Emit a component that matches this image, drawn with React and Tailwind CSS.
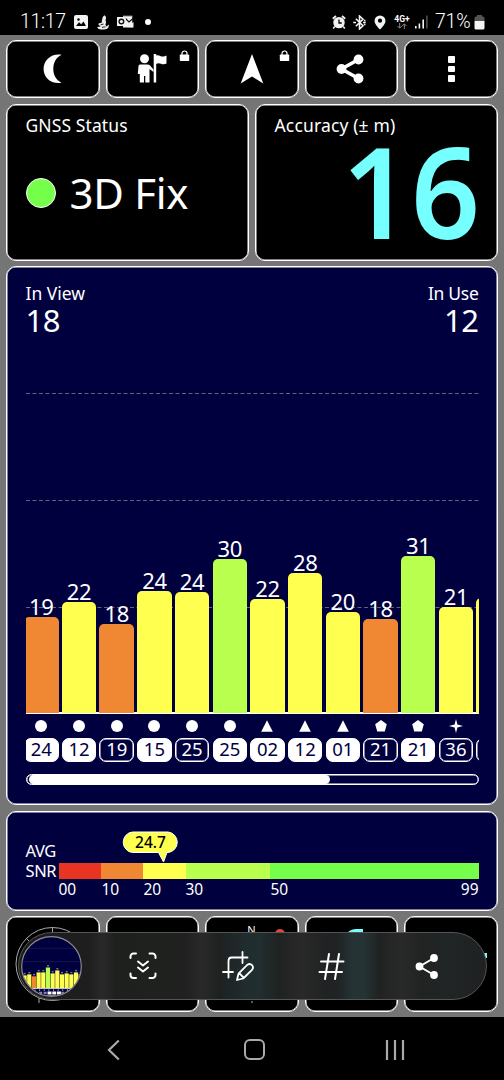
import React from "react";

const ORANGE = "bg-[#f08833]";
const YELLOW = "bg-[#ffff50]";
const LIME = "bg-[#b9ff4d]";

const satellites = [
  { id: "24", snr: 19, height: 96.5, color: ORANGE, shape: "circle", used: true },
  { id: "12", snr: 22, height: 111.5, color: YELLOW, shape: "circle", used: true },
  { id: "19", snr: 18, height: 89.5, color: ORANGE, shape: "circle", used: false },
  { id: "15", snr: 24, height: 122.5, color: YELLOW, shape: "circle", used: true },
  { id: "25", snr: 24, height: 121, color: YELLOW, shape: "circle", used: false },
  { id: "25", snr: 30, height: 154, color: LIME, shape: "circle", used: true },
  { id: "02", snr: 22, height: 114, color: YELLOW, shape: "triangle", used: true },
  { id: "12", snr: 28, height: 140.5, color: YELLOW, shape: "triangle", used: true },
  { id: "01", snr: 20, height: 101.5, color: YELLOW, shape: "triangle", used: true },
  { id: "21", snr: 18, height: 94, color: ORANGE, shape: "pentagon", used: false },
  { id: "21", snr: 31, height: 157, color: LIME, shape: "pentagon", used: true },
  { id: "36", snr: 21, height: 106, color: YELLOW, shape: "star", used: false },
  { id: "", snr: "", height: 115, color: YELLOW, shape: "", used: false },
];

const miniBars = [
  ["#ffff50", 13], ["#ffff50", 14], ["#f08833", 12], ["#ffff50", 16], ["#ffff50", 16],
  ["#b9ff4d", 21], ["#ffff50", 15], ["#ffff50", 18], ["#ffff50", 14], ["#ffff50", 15],
  ["#ffff50", 14], ["#ffff50", 16], ["#ffff50", 14],
];

function Shape({ type }) {
  return (
    <svg width="14" height="14" viewBox="0 0 14 14" fill="white">
      {type === "circle" && <circle cx="7" cy="7" r="6" />}
      {type === "triangle" && <path d="M7 1.2L12.8 12.8H1.2Z" />}
      {type === "pentagon" && <path d="M7 1L12.8 5.2L10.8 12.5H3.2L1.2 5.2Z" />}
      {type === "star" && <path d="M7 0L8.4 5.6L14 7L8.4 8.4L7 14L5.6 8.4L0 7L5.6 5.6Z" />}
    </svg>
  );
}

function StatusBar() {
  return (
    <div className="flex h-[35px] items-center bg-black pt-[9px] pr-[19px] pl-[20px] font-[Roboto,sans-serif] text-white">
      <span className="w-[54px] text-[19.5px] leading-none tracking-[-0.3px] font-light">11:17</span>
      <svg width="14" height="14" viewBox="0 0 14 14">
        <rect width="14" height="14" rx="2" fill="#f3f3f3" />
        <path d="M2 11L5 7.2L7.2 9.2L9.5 6.5L12 11Z" fill="#000" />
        <circle cx="4.5" cy="4.5" r="1.2" fill="#000" />
      </svg>
      <svg className="ml-[9px]" width="12" height="15" viewBox="0 0 12 15">
        <path d="M7.3 .3Q9.3 1 9 3.2L8.5 5.5Q9.6 7 8.4 9.6L9.5 11.5L11.8 9.6Q12.3 12.6 9.5 14L7 14.6H3.5Q.6 14 .2 12L3.6 11.6L1.2 9.3Q2 7.6 4 8L5.2 7Q4.2 6 5.3 4.6Q5 2 7.3 .3Z" fill="#eee" />
        <path d="M3.5 9.8L6.5 9M5 12.3L8.5 11.8" stroke="#111" strokeWidth=".9" fill="none" />
      </svg>
      <svg className="ml-[8px]" width="17" height="14" viewBox="0 0 17 14">
        <path d="M6 .5H15.5V13H6Z" fill="#777" />
        <path d="M6 1.4H15V12H6Z" fill="#f2f2f2" />
        <path d="M8 3L12 7L16 3.5" stroke="#111" strokeWidth="1.2" fill="none" />
        <path d="M10 12L16.5 7V12.5Z" fill="#f2f2f2" />
        <rect x="0" y="2" width="8.8" height="9" fill="#f2f2f2" />
        <circle cx="4.4" cy="6.5" r="2.3" stroke="#111" strokeWidth="1.4" fill="none" />
      </svg>
      <span className="ml-[11px] size-[6px] rounded-full bg-white" />
      <div className="flex-1" />
      <svg width="14" height="14" viewBox="0 0 14 14">
        <path d="M.8 3.8L4 1M13.2 3.8L10 1" stroke="#f3f3f3" strokeWidth="1.8" />
        <circle cx="7" cy="7.6" r="5.7" fill="#f3f3f3" />
        <path d="M7 4.5V8H9.8" stroke="#000" strokeWidth="1.3" fill="none" />
        <path d="M2.8 11.5L1.2 13.5M11.2 11.5L12.8 13.5" stroke="#f3f3f3" strokeWidth="1.5" />
      </svg>
      <svg className="ml-[7px]" width="13" height="15" viewBox="0 0 13 15" fill="none" stroke="#f3f3f3" strokeWidth="1.6">
        <path d="M2.8 3.8L10 10.8L6.5 14V1L10 4.2L2.8 11.2" />
        <path d="M.2 7.5H3M10 7.5H12.8M11 5.8L12.4 5.3M11 9.2L12.4 9.7" />
      </svg>
      <svg className="ml-[8px]" width="12" height="15" viewBox="0 0 12 15">
        <path d="M6 .5A5.5 5.5 0 0 0 .5 6C.5 9.5 6 14.5 6 14.5S11.5 9.5 11.5 6A5.5 5.5 0 0 0 6 .5Z" fill="#f3f3f3" />
        <circle cx="6" cy="5.7" r="2.1" fill="#000" />
      </svg>
      <div className="ml-[8px] flex w-[16px] flex-col items-center">
        <span className="text-[8.5px] leading-[8px] font-bold">4G+</span>
        <svg className="shrink-0" width="10" height="6" viewBox="0 0 10 6" fill="none" stroke="#888" strokeWidth="1">
          <path d="M2.7 0V5M.5 3L2.7 5.2L4.9 3M7.3 6V1M5.2 3L7.3 .8L9.4 3" />
        </svg>
      </div>
      <svg className="ml-[5px]" width="13" height="14" viewBox="0 0 13 14">
        <path d="M.8 11V13.5M4.4 8.5V13.5M8.2 4.5V13.5" stroke="#f3f3f3" strokeWidth="1.6" />
        <path d="M11.9 .5V13.5" stroke="#555" strokeWidth="1.5" />
      </svg>
      <span className="ml-[7px] w-[38px] text-[19.5px] leading-none tracking-[-0.2px] font-light">71%</span>
      <svg className="ml-[1px]" width="11" height="15" viewBox="0 0 11 15">
        <path d="M3 0H8V1.5H9Q10.5 1.5 10.5 3V6H.5V3Q.5 1.5 2 1.5H3Z" fill="#555" />
        <path d="M.5 6H10.5V13Q10.5 14.5 9 14.5H2Q.5 14.5 .5 13Z" fill="#f5f5f5" />
      </svg>
    </div>
  );
}

function ToolButton({ children, locked }) {
  return (
    <button className="relative flex h-[58px] flex-1 items-center justify-center rounded-[10px] border border-white bg-black shadow-[inset_0_0_0_0.5px_white]">
      {children}
      {locked && (
        <svg className="absolute top-[9px] right-[8px]" width="11" height="12" viewBox="0 0 11 12">
          <rect x=".8" y="4.5" width="9.4" height="6.5" rx=".8" fill="white" />
          <path d="M3 5V3.5A2.5 2.5 0 0 1 8 3.5V5" stroke="white" strokeWidth="1.2" fill="none" />
        </svg>
      )}
    </button>
  );
}

function Toolbar() {
  return (
    <div className="flex gap-1.5">
      <ToolButton>
        <svg width="20" height="30" viewBox="0 0 20 30" fill="white">
          <path d="M18.5 .8C8.5 -.8 .6 6 .6 15S8.5 30.5 18.5 28.7C13 26 10.3 21 10.3 15S13 3.5 18.5 .8Z" />
        </svg>
      </ToolButton>
      <ToolButton locked>
        <svg width="30" height="30" viewBox="0 0 30 30" fill="white">
          <circle cx="7.5" cy="4.8" r="4.5" />
          <path d="M3 10.5H10.5Q12 10.5 13 11.5L16.5 15.5V18L12.5 15V28.5H8.3V22H7V28.5H2.8V20H.8L1.5 12Q1.6 10.5 3 10.5Z" />
          <path d="M16.7 0H19.2V28.5H16.7Z" />
          <path d="M19 1.5C23 0 24 4.5 29.5 1.5V9.5C25 12 23 7.5 19 10Z" />
        </svg>
      </ToolButton>
      <ToolButton locked>
        <svg width="24" height="30" viewBox="0 0 24 30" fill="white">
          <path d="M12 0L23.3 29.5L12 22.5L.7 29.5Z" />
        </svg>
      </ToolButton>
      <ToolButton>
        <svg className="-ml-[4px]" width="28" height="30" viewBox="0 0 28 30" fill="white">
          <path d="M22.5 5.5L5.5 15L22.5 24.5" fill="none" stroke="white" strokeWidth="3.6" />
          <circle cx="5.5" cy="15" r="4.9" />
          <circle cx="22.5" cy="5.5" r="4.9" />
          <circle cx="22.5" cy="24.5" r="4.9" />
        </svg>
      </ToolButton>
      <ToolButton>
        <div className="flex flex-col gap-[3px]">
          <span className="size-[6.7px] rounded-[1px] bg-white" />
          <span className="size-[6.7px] rounded-[1px] bg-white" />
          <span className="size-[6.7px] rounded-[1px] bg-white" />
        </div>
      </ToolButton>
    </div>
  );
}

function SignalPanel() {
  return (
    <section className="flex h-[539px] flex-col rounded-[10px] border border-white bg-[#00003f] px-[18.5px] pt-[14px] shadow-[inset_0_0_0_0.5px_white]">
      <div className="flex justify-between">
        <div>
          <p className="text-[17.5px] leading-[24px]">In View</p>
          <p className="text-[31px] leading-[30px] tracking-[-0.5px]">18</p>
        </div>
        <div className="text-right">
          <p className="text-[17.5px] leading-[24px] tracking-[-0.3px]">In Use</p>
          <p className="text-[31px] leading-[30px] tracking-[-0.5px]">12</p>
        </div>
      </div>

      <div className="relative mt-[55.5px] h-[390px]">
        <svg className="absolute top-px left-0" width="453" height="220" stroke="#62627c" strokeWidth="1" strokeDasharray="4 2.5">
          <path d="M0 1.5H453M0 108.5H453M0 215.5H453" />
        </svg>
        <div className="relative h-[373px] overflow-hidden">
          <div className="-ml-[1.4px] flex h-[322.5px] w-[500px] items-end gap-[3.2px]">
            {satellites.map((s, i) => (
              <div key={i} className="w-[34.5px] shrink-0">
                <p className="h-[21px] text-center text-[22px] leading-[20px] tracking-[-0.3px]">{s.snr}</p>
                <div className={`rounded-t-[5px] ${s.color}`} style={{ height: s.height }} />
              </div>
            ))}
          </div>
          <div className="-mt-px h-[1.5px] bg-white" />
          <div className="-ml-[1.4px] flex w-[500px] gap-[3.2px] pt-[5px]">
            {satellites.map((s, i) => (
              <div key={i} className="flex w-[34.5px] shrink-0 flex-col items-center">
                <Shape type={s.shape} />
                <span
                  className={`mt-[5px] flex h-[24px] w-full items-center justify-center rounded-[7px] border border-white text-[18.5px] leading-none shadow-[inset_0_0_0_0.5px_white] ${
                    s.used ? "bg-white text-[#00003f]" : "text-white"
                  }`}
                >
                  {s.id}
                </span>
              </div>
            ))}
          </div>
        </div>
        <div className="mt-[10px] h-[11.5px] overflow-hidden rounded-full border border-white pl-[2px] shadow-[inset_0_0_0_0.5px_white]">
          <div className="h-full w-[301px] rounded-full bg-white" />
        </div>
      </div>
    </section>
  );
}

function SnrPanel() {
  return (
    <section className="relative flex h-[100px] rounded-[10px] border border-white bg-[#00003f] px-[18.5px] pt-[29.5px] shadow-[inset_0_0_0_0.5px_white]">
      <p className="w-[33px] text-[16.5px] leading-[19.5px] tracking-[-0.4px]">
        AVG
        <br />
        SNR
      </p>
      <div className="flex-1 pt-[22px]">
        <div className="flex h-[16px]">
          <div className="w-[42.3px] bg-[#e93323]" />
          <div className="w-[42.4px] bg-[#f08833]" />
          <div className="w-[42.4px] bg-[#ffff50]" />
          <div className="w-[84.5px] bg-[#b9ff4d]" />
          <div className="flex-1 bg-[#75ff4b]" />
        </div>
        <div className="flex text-[15.5px] leading-[20px]">
          <span className="w-[43px]">00</span>
          <span className="w-[42px]">10</span>
          <span className="w-[42px]">20</span>
          <span className="w-[85px]">30</span>
          <span>50</span>
          <span className="ml-auto">99</span>
        </div>
      </div>
      <div className="absolute top-[19px] left-[114px] h-[32px] w-[59px]">
        <svg className="absolute inset-0" width="59" height="32" viewBox="0 0 59 32">
          <path d="M11.5 1H47A10.3 10.3 0 0 1 47 21.5H46L42.5 31L37.5 21.5H11.5A10.3 10.3 0 0 1 11.5 1Z" fill="#ffff50" stroke="white" />
        </svg>
        <span className="relative block text-center text-[15.5px] leading-[22px] font-medium text-black">24.7</span>
      </div>
    </section>
  );
}

function BottomCards() {
  const card = "relative h-[95.5px] flex-1 overflow-hidden rounded-[10px] border border-white bg-black shadow-[inset_0_0_0_0.5px_white]";
  return (
    <div className="flex gap-1.5">
      <div className={card}>
        <svg className="absolute inset-0" width="94" height="95" fill="none" stroke="#aaa">
          <circle cx="45.5" cy="47" r="36.5" />
          <path d="M45.5 10.5V16M19 21L22 24M32 81V86" />
        </svg>
      </div>
      <div className={card} />
      <div className={card}>
        <span className="absolute top-[5px] left-[41px] text-[11px] leading-[16px]">N</span>
        <span className="absolute top-[12px] left-[69px] size-[10px] rounded-full bg-[#e6443e]" />
        <span className="absolute top-[84px] left-[45px] size-[2px] rounded-full bg-[#777]" />
      </div>
      <div className={card}>
        <span className="absolute top-[12px] left-[38px] h-[22px] w-[19px] rounded-tl-[12px] bg-[#75ffff]" />
      </div>
      <div className={card}>
        <span className="absolute top-[36px] left-[78px] h-[5px] w-[4px] bg-[#75ffff]" />
      </div>
    </div>
  );
}

function CapturePreview() {
  return (
    <svg className="size-[61px] shrink-0" viewBox="0 0 62 62">
      <clipPath id="preview">
        <circle cx="31" cy="31" r="30" />
      </clipPath>
      <g clipPath="url(#preview)">
        <rect width="62" height="62" fill="#00003f" />
        <path d="M0 12.5H62M0 26H62" stroke="#22225a" strokeWidth=".6" />
        {miniBars.map(([fill, h], i) => (
          <rect key={i} x={1.5 + i * 4.75} y={53 - h} width="4.3" height={h} fill={fill} />
        ))}
        {miniBars.map(([, h], i) => (
          <rect key={i} x={2.7 + i * 4.75} y={50.5 - h} width="2" height="1.5" fill="#777799" />
        ))}
        <path d="M0 53.3H62" stroke="white" strokeWidth=".8" />
        <path d="M9 55H55" stroke="#d6d6e6" strokeWidth="1.2" strokeDasharray="1 3.7" />
        <path d="M14 58H27M41 58H49" stroke="#8585aa" strokeWidth="2.5" strokeDasharray="3 1.5" />
        <path d="M27 58H41" stroke="white" strokeWidth="3" strokeDasharray="4 .8" />
        <path d="M18 61H42" stroke="white" strokeWidth="1" />
      </g>
      <circle cx="31" cy="31" r="30.3" fill="none" stroke="#8c8c91" strokeWidth="1.2" />
    </svg>
  );
}

function CaptureBar() {
  return (
    <div className="absolute top-[932px] left-[18px] flex h-[68px] w-[469px] items-center overflow-hidden rounded-full border border-[#555] bg-[linear-gradient(90deg,#1c1c1c_0px,#1e1e1e_70px,#292929_83px,#1e201e_96px,#1e211d_130px,#202120_168px,#292929_182px,#1e2121_202px,#202c2e_226px,#212e2f_240px,#202222_260px,#292929_283px,#202223_306px,#202425_320px,#253334_334px,#253334_345px,#202222_360px,#292929_383px,#212323_402px,#202526_430px,#1f2021_469px)] pl-[2px]">
      <CapturePreview />
      <svg className="ml-[47px]" width="28" height="28" viewBox="0 0 28 28" fill="none" stroke="white" strokeWidth="2" strokeLinecap="round" strokeLinejoin="round">
        <path d="M1.5 6V4.5A3 3 0 0 1 4.5 1.5H7M20.5 1.5H23A3 3 0 0 1 26.5 4.5V6M1.5 21.5V23A3 3 0 0 0 4.5 26H7M20.5 26H23A3 3 0 0 0 26.5 23V21.5" />
        <path d="M9 9.5L14 13.5L19 9.5M9 15.5L14 19.5L19 15.5" />
      </svg>
      <svg className="ml-[65px]" width="33" height="32" viewBox="0 0 33 32" fill="none" stroke="white" strokeWidth="1.8" strokeLinecap="round" strokeLinejoin="round">
        <path d="M1 22H11M6.5 27.5V11Q6.5 7.5 9.5 7.5H25.5M20.5 2V13" />
        <path d="M15 30L16.5 23.7L25.5 14.7Q28 13 30 15.2Q32 17.5 30 19.8L21.2 28.5Z" />
        <path d="M17.5 23.5L21.5 27.5" />
      </svg>
      <svg className="ml-[63px]" width="27" height="29" viewBox="0 0 27 29" stroke="white" strokeWidth="2" strokeLinecap="round">
        <path d="M11 2L7 27M21 2L17 27M3 9.5H25.5M1.5 20H24" />
      </svg>
      <svg className="ml-[70px]" width="24" height="27" viewBox="0 0 24 27" fill="white">
        <path d="M19 5L4.5 13.5L19 22" fill="none" stroke="white" strokeWidth="1.9" />
        <circle cx="4.5" cy="13.5" r="3.9" />
        <circle cx="19" cy="5" r="3.9" />
        <circle cx="19" cy="22" r="3.9" />
      </svg>
    </div>
  );
}

function NavBar() {
  return (
    <nav className="flex h-[63px] items-center bg-black pt-[2px] pl-[107px]">
      <svg width="13" height="22" viewBox="0 0 13 22" fill="none" stroke="#aaa" strokeWidth="2.2">
        <path d="M11.8 1.5L2 11L11.8 20.5" />
      </svg>
      <span className="ml-[124px] h-[21px] w-[21px] rounded-[6px] border-2 border-[#aaa]" />
      <svg className="ml-[120px]" width="20" height="22" stroke="#aaa" strokeWidth="2.2">
        <path d="M2 1V21M10 1V21M18 1V21" />
      </svg>
    </nav>
  );
}

export default function App() {
  return (
    <div className="relative h-[1080px] w-[504px] overflow-hidden bg-black font-['Noto_Sans',sans-serif] text-white">
      <StatusBar />
      <main className="flex h-[982px] flex-col gap-[5.5px] bg-[#757575] px-1.5 pt-[5px]">
        <Toolbar />
        <div className="flex gap-1.5">
          <section className="h-[157px] flex-1 rounded-[10px] border border-white bg-black px-[18.5px] pt-[8px] shadow-[inset_0_0_0_0.5px_white]">
            <p className="text-[17.5px] leading-[24px] tracking-[0.1px]">GNSS Status</p>
            <div className="mt-[30px] flex items-center">
              <span className="size-[30px] rounded-full border border-white bg-[#75ff4b]" />
              <span className="ml-[14px] text-[42px] leading-[52px] tracking-[-0.3px]">3D Fix</span>
            </div>
          </section>
          <section className="h-[157px] flex-1 rounded-[10px] border border-white bg-black px-[18.5px] pt-[8px] shadow-[inset_0_0_0_0.5px_white]">
            <p className="text-[17.5px] leading-[24px] tracking-[0.15px]">Accuracy (± m)</p>
            <p className="-mr-[1px] origin-right scale-x-95 text-right text-[127px] leading-[105px] font-semibold text-[#75ffff]">16</p>
          </section>
        </div>
        <SignalPanel />
        <SnrPanel />
        <BottomCards />
      </main>
      <NavBar />
      <CaptureBar />
    </div>
  );
}
